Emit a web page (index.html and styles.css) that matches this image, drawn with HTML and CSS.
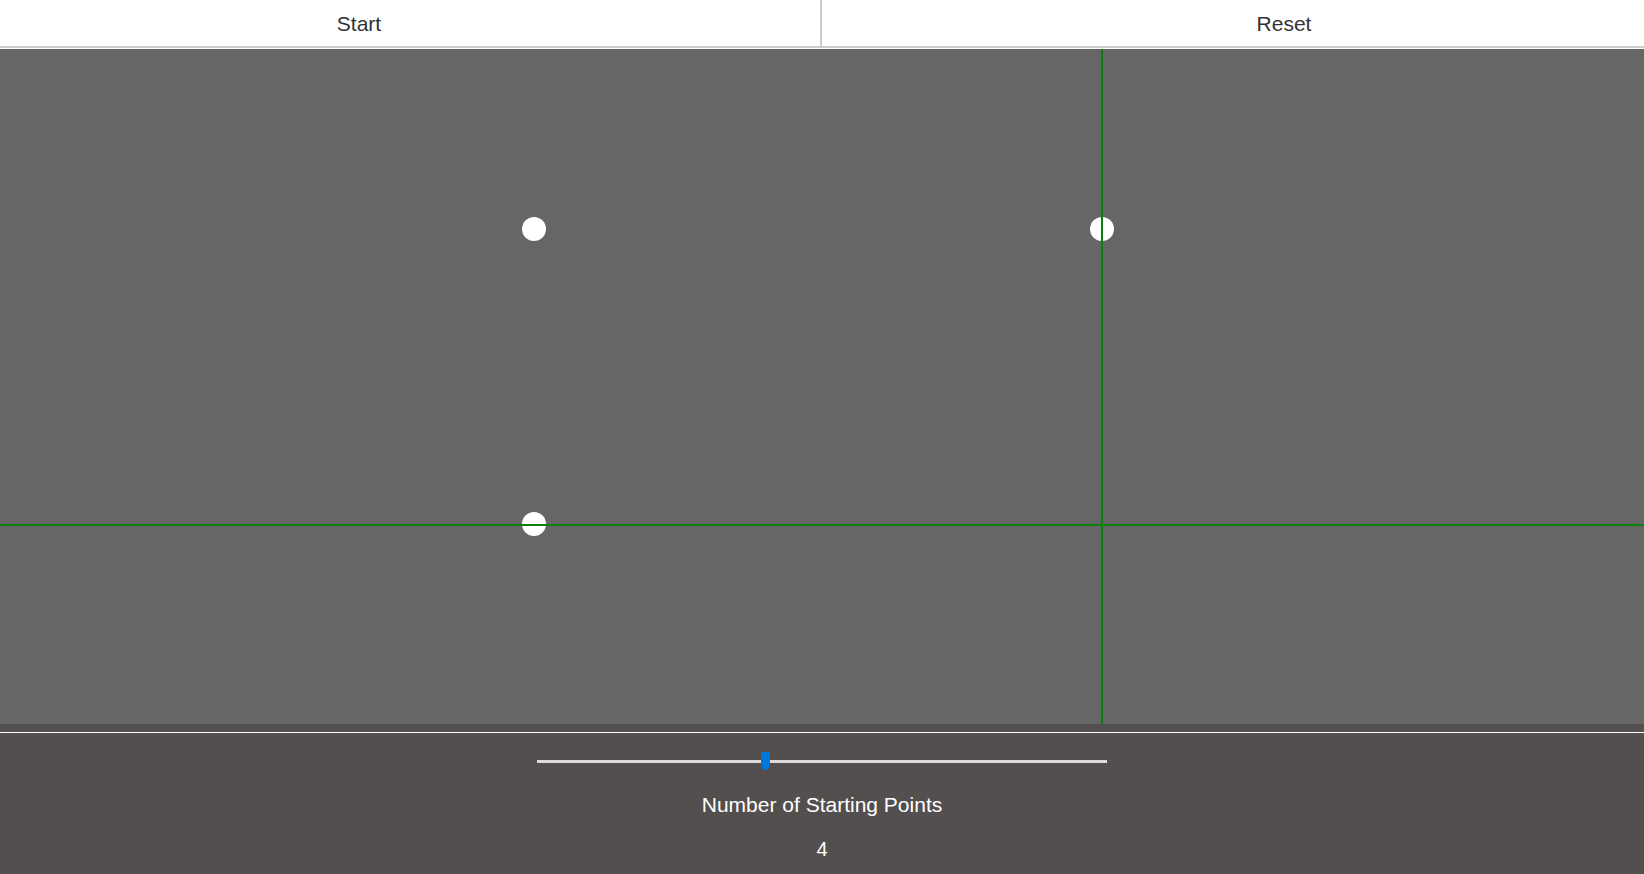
FILE: index.html
```html
<!DOCTYPE html>
<html lang="en">
<head>
<meta charset="utf-8">
<title>Starting Points</title>
<link rel="stylesheet" href="styles.css">
</head>
<body>
  <header class="toolbar">
    <button class="btn btn-start" type="button">Start</button>
    <button class="btn btn-reset" type="button">Reset</button>
  </header>
  <main class="stage">
    <svg class="board" width="1644" height="675" viewBox="0 0 1644 675" xmlns="http://www.w3.org/2000/svg">
      <circle cx="534" cy="180" r="12" fill="#ffffff"/>
      <circle cx="1102" cy="180" r="12" fill="#ffffff"/>
      <circle cx="534" cy="475" r="12" fill="#ffffff"/>
      <rect x="1101" y="0" width="2" height="675" fill="#0b800b"/>
      <rect x="0" y="475" width="1644" height="2" fill="#0b800b"/>
    </svg>
  </main>
  <section class="controls">
    <input class="slider" type="range" min="0" max="10" value="4" aria-label="Number of Starting Points">
    <div class="label">Number of Starting Points</div>
    <div class="value">4</div>
  </section>
</body>
</html>
```

FILE: styles.css
```css
html, body {
  margin: 0;
  padding: 0;
}

body {
  font-family: "Liberation Sans", Arial, sans-serif;
  background: #534f4e;
  height: 874px;
  overflow: hidden;
}

.toolbar {
  display: flex;
  background: #ffffff;
  height: 49px;
}

.btn {
  box-sizing: border-box;
  flex: none;
  height: 48px;
  margin: 0;
  background: #ffffff;
  border: none;
  border-bottom: 2px solid #cccccc;
  font-family: "Liberation Sans", Arial, sans-serif;
  font-size: 21px;
  color: #333333;
  display: flex;
  align-items: center;
  justify-content: center;
  padding: 2px 0 0 0;
}

.btn-start {
  width: 822px;
  border-right: 2px solid #cccccc;
  padding-right: 102px;
}

.btn-reset {
  width: 822px;
  padding-left: 102px;
}

.stage {
  background: #534f4e;
  padding-bottom: 8px;
}

.board {
  display: block;
  background: #666666;
}

.controls {
  border-top: 1px solid #ffffff;
  height: 141px;
  display: flex;
  flex-direction: column;
  align-items: center;
  color: #ffffff;
  box-sizing: border-box;
  padding-top: 19px;
}

.slider {
  -webkit-appearance: none;
  appearance: none;
  width: 570px;
  height: 18px;
  margin: 0;
  background: transparent;
}

.slider::-webkit-slider-runnable-track {
  height: 3px;
  background: #dcdcdc;
  border: none;
}

.slider::-webkit-slider-thumb {
  -webkit-appearance: none;
  appearance: none;
  width: 9px;
  height: 18px;
  margin-top: -8px;
  background: #0078d7;
  border: none;
  border-radius: 2px 2px 50% 50% / 2px 2px 35% 35%;
}

.label {
  font-size: 21px;
  line-height: 24px;
  margin-top: 23px;
}

.value {
  font-size: 20px;
  line-height: 24px;
  margin-top: 20px;
}
```
